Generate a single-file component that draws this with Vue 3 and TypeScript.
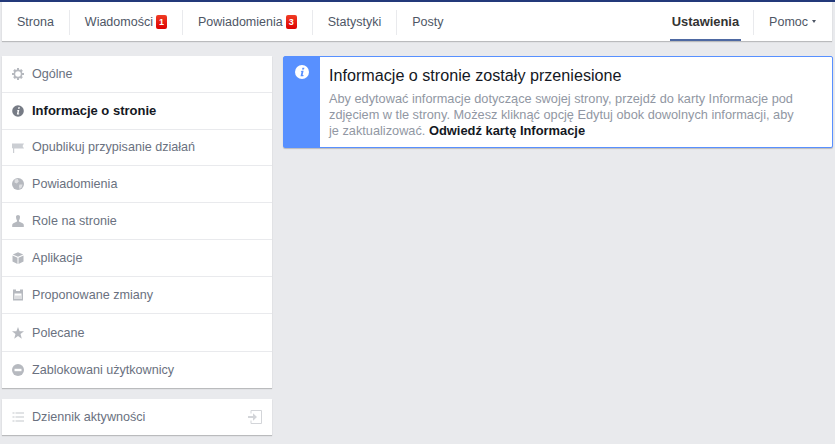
<script setup lang="ts">
interface NavTab { label: string; badge?: string }
const leftTabs: NavTab[] = [
  { label: 'Strona' },
  { label: 'Wiadomości', badge: '1' },
  { label: 'Powiadomienia', badge: '3' },
  { label: 'Statystyki' },
  { label: 'Posty' },
]
const items = [
  { label: 'Ogólne', icon: 'gear' },
  { label: 'Informacje o stronie', icon: 'info', active: true },
  { label: 'Opublikuj przypisanie działań', icon: 'flag' },
  { label: 'Powiadomienia', icon: 'globe' },
  { label: 'Role na stronie', icon: 'person' },
  { label: 'Aplikacje', icon: 'box' },
  { label: 'Proponowane zmiany', icon: 'cal' },
  { label: 'Polecane', icon: 'star' },
  { label: 'Zablokowani użytkownicy', icon: 'block' },
]
</script>

<template>
  <div class="page">
    <header class="topbar">
      <nav class="tabs">
        <template v-for="(t, i) in leftTabs" :key="t.label">
          <span v-if="i > 0" class="sep"></span>
          <a class="tab">{{ t.label }}<span v-if="t.badge" class="badge">{{ t.badge }}</span></a>
        </template>
      </nav>
      <nav class="tabs right">
        <a class="tab current">Ustawienia</a>
        <span class="sep"></span>
        <a class="tab help">Pomoc<span class="caret"></span></a>
      </nav>
    </header>

    <div class="content">
      <aside class="side">
        <ul class="card menu">
          <li v-for="it in items" :key="it.label" class="row" :class="{ on: it.active }">
            <svg class="ico" viewBox="0 0 12 12" aria-hidden="true">
              <template v-if="it.icon === 'gear'">
                <path d="M5 0h2v1.600l1 .4L9.200 1l1.600 1.700L9.900 4l.4 1H12v2h-1.700l-.4 1 .9 1.200L9.200 11 8 10l-1 .4V12H5v-1.600L4 10l-1.200 1-1.600-1.800L2.100 8l-.4-1H0V5h1.700l.4-1-.9-1.300L2.800 1 4 2l1-.4z" fill="#b6b9bf" />
                <circle cx="6" cy="6" r="2.800" fill="#fff" />
              </template>
              <template v-else-if="it.icon === 'info'">
                <circle cx="6" cy="6" r="5.800" fill="#767b85" />
                <path d="M6.300 2.300h1.600l-.3 1.500H6zM5.600 5h1.700l-.8 3.500h.8l-.2.9H4.800l.8-3.500H5z" fill="#fff" />
              </template>
              <template v-else-if="it.icon === 'flag'">
                <path d="M0 2.500h12l-1.500 2.400L12 7.500H2.200V12H1V7.500L0 7z" fill="#cbced3" />
              </template>
              <template v-else-if="it.icon === 'globe'">
                <circle cx="6" cy="6" r="6" fill="#b6b9bf" />
                <path d="M2.800 1.600l3-.5 1 2.300-2 2-2.300-.8zM7.400 6.400l3.200.2-1 2.800-2 1.600-.6-2.400z" fill="#fff" opacity=".55" />
              </template>
              <template v-else-if="it.icon === 'person'">
                <path d="M4 1.800C4 .7 4.900 0 6 0s2 .7 2 1.800c0 1.500-.5 3-1 3.600v1.200l3.600 1.600c.8.4 1.200 1 1.200 1.800V12H.2v-2c0-.8.4-1.400 1.200-1.800L5 6.600V5.400C4.500 4.800 4 3.300 4 1.800z" fill="#b6b9bf" />
              </template>
              <template v-else-if="it.icon === 'box'">
                <path d="M6 .2l5.200 2.200L6 4.800.8 2.400z" fill="#b6b9bf" />
                <path d="M.5 3.400l5 2.300V12L.5 9.400zM11.500 3.400l-5 2.300V12l5-2.600z" fill="#b6b9bf" />
              </template>
              <template v-else-if="it.icon === 'cal'">
                <path d="M1 .5h3V2h4V.5h3v11H1z" fill="#b6b9bf" />
                <rect x="2.500" y="4.500" width="7" height="5.500" fill="#fff" />
                <rect x="2.500" y="6.500" width="7" height="3.500" fill="#dcdde0" />
              </template>
              <template v-else-if="it.icon === 'star'">
                <path d="M6 0l1.600 4.300H12L8.500 7l1.300 4.700L6 9l-3.800 2.700L3.500 7 0 4.300h4.400z" fill="#b6b9bf" />
              </template>
              <template v-else>
                <circle cx="6" cy="6" r="6" fill="#b6b9bf" />
                <rect x="2.500" y="4.800" width="7" height="2.400" fill="#fff" />
              </template>
            </svg>
            <span>{{ it.label }}</span>
          </li>
        </ul>
        <div class="card log">
          <svg class="ico" viewBox="0 0 12 12" aria-hidden="true">
            <path d="M.5 1.500h2v1h-2zM3.500 1.500H12v1H3.500zM.5 5.500h2v1h-2zM3.500 5.500H12v1H3.500zM.5 9.500h2v1h-2zM3.500 9.500H12v1H3.500z" fill="#c4c7cc" />
          </svg>
          <span>Dziennik aktywności</span>
          <svg class="exit" viewBox="0 0 14 14" aria-hidden="true">
            <path d="M3 3.500V.5h10.500v13H3v-3" fill="none" stroke="#d3d5d9" />
            <path d="M0 6h5V3.200L9 7l-4 3.800V8H0z" fill="#d3d5d9" />
          </svg>
        </div>
      </aside>

      <section class="notice">
        <div class="notice-side">
          <svg class="notice-ico" viewBox="0 0 14 14" aria-hidden="true">
            <circle cx="7" cy="7" r="7" fill="#fff" />
            <path d="M7.400 2.700h2l-.4 1.800H7zM6.600 5.800h2l-1 4.300h1l-.3 1.100H5.500l1-4.300h-.8z" fill="#5890ff" />
          </svg>
        </div>
        <div class="notice-body">
          <h2>Informacje o stronie zostały przeniesione</h2>
          <p>Aby edytować informacje dotyczące swojej strony, przejdź do karty Informacje pod zdjęciem w tle strony. Możesz kliknąć opcję Edytuj obok dowolnych informacji, aby je zaktualizować. <b>Odwiedź kartę Informacje</b></p>
        </div>
      </section>
    </div>
  </div>
</template>

<style>
html, body { margin: 0; background: #e9eaed; }
</style>

<style scoped>
.page {
  width: 835px;
  height: 444px;
  overflow: hidden;
  background: #e9eaed;
  font-family: "Liberation Sans", Arial, sans-serif;
  border-top: 2px solid #23397a;
  box-sizing: border-box;
}
.topbar {
  display: flex;
  justify-content: space-between;
  height: 39px;
  margin: 0 3px 0 2px;
  background: #fff;
  box-shadow: 0 1px 1px rgba(0, 0, 0, .2);
}
.tabs { display: flex; align-items: center; height: 100%; }
.tabs.right { align-items: stretch; }
.sep { width: 1px; height: 25px; background: #e9eaed; margin-top: 1px; }
.tabs.right .sep { align-self: center; }
.tab {
  display: flex;
  align-items: center;
  height: 100%;
  padding: 0 15px;
  font-size: 12.500px;
  color: #4e5665;
  box-sizing: border-box;
}
.badge {
  width: 11px;
  height: 14px;
  margin-left: 3px;
  border-radius: 2px;
  background: linear-gradient(#f03d25, #d00);
  color: #fff;
  font-size: 9px;
  font-weight: 700;
  line-height: 14px;
  text-align: center;
}
.current {
  color: #333;
  font-size: 12.900px;
  font-weight: 700;
  border-bottom: 2px solid #4e69a2;
  padding: 2px 2px 0;
  margin-right: 12px;
}
.help { padding-right: 16px; }
.caret {
  width: 0;
  height: 0;
  margin-left: 4px;
  border: 2.500px solid transparent;
  border-top: 3px solid #4e5665;
  border-bottom: 0;
}
.content {
  display: flex;
  align-items: flex-start;
  gap: 11px;
  padding: 15px 2px 0;
}
.side { width: 270px; flex: none; }
.card {
  background: #fff;
  box-shadow: 0 1px 1px rgba(0, 0, 0, .2);
}
.menu { list-style: none; margin: 0 0 11px; padding: 0; }
.row, .log {
  display: flex;
  align-items: center;
  height: 37px;
  padding-left: 10px;
  box-sizing: border-box;
  font-size: 12.600px;
  color: #6a7180;
}
.row { border-bottom: 1px solid #e9eaed; }
.row:last-child { border-bottom: 0; height: 36px; }
.row:nth-child(3) { height: 36px; padding-bottom: 2px; }
.row:nth-child(8) { height: 38px; }
.row.on { color: #141823; font-size: 13px; font-weight: 700; }
.row.on span { margin-top: -2px; }
.ico { width: 12px; height: 12px; margin-right: 8px; flex: none; }
.log { height: 36px; }
.exit { width: 14px; height: 14px; margin-left: auto; margin-right: 10px; }
.notice {
  display: flex;
  width: 550px;
  height: 92px;
  flex: none;
  background: #fff;
  border: 1px solid #5890ff;
  border-radius: 2px;
  box-sizing: border-box;
  box-shadow: 0 1px 1px rgba(0, 0, 0, .2);
}
.notice-side {
  width: 36px;
  flex: none;
  background: #5890ff;
  display: flex;
  justify-content: center;
  padding-top: 8px;
  box-sizing: border-box;
}
.notice-ico { width: 14px; height: 14px; }
.notice-body { padding: 9px 10px 0 9px; }
h2 { margin: 0; font-size: 16.150px; font-weight: 400; line-height: 18px; color: #141823; }
p { margin: 7px 0 0; max-width: 472px; font-size: 12.750px; line-height: 16px; color: #9197a3; }
p b { color: #141823; font-size: 12.900px; }
</style>
